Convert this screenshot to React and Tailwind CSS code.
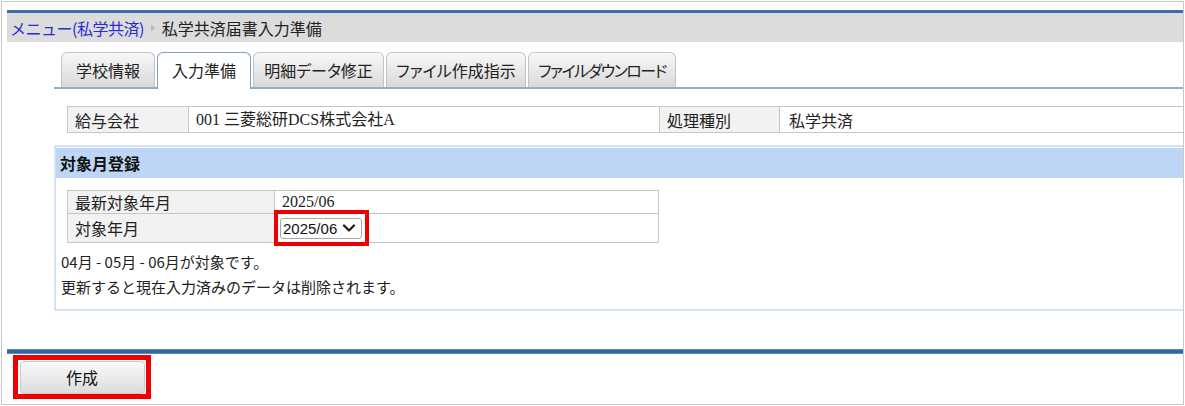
const jp = { fontFamily: '"Noto Sans CJK JP", "Noto Sans", sans-serif' }
const mixed = { fontFamily: '"Liberation Serif", "Noto Sans CJK JP", serif' }

const TABS = [
  { label: '学校情報', w: 'w-[94px]' },
  { label: '入力準備', w: 'w-[94px]', active: true },
  { label: '明細データ修正', w: 'w-[131px]' },
  { label: 'ファイル作成指示', w: 'w-[140px]' },
  { label: 'ファイルダウンロード', w: 'w-[148px]', tight: true },
]

function Tab({ tab }) {
  const text = (
    <span className={`whitespace-nowrap ${tab.tight ? 'tracking-[-1.5px]' : ''}`} style={{ fontFeatureSettings: '"palt"' }}>
      {tab.label}
    </span>
  )
  if (tab.active) {
    return (
      <div className={`${tab.w} h-[37px] -mb-[2px] pb-[2px] flex items-center justify-center rounded-t-[6px] border border-b-0 border-[#7f9fc4] bg-white text-[16px] leading-none text-[#222]`}>
        {text}
      </div>
    )
  }
  return (
    <div className={`${tab.w} h-[35px] flex items-center justify-center rounded-t-[6px] border border-b-0 border-[#c4c4c4] bg-gradient-to-b from-[#f8f8f8] to-[#d9d9d9] text-[16px] leading-none text-[#222]`}>
      {text}
    </div>
  )
}

export default function App() {
  return (
    <div className="w-[1185px] h-[406px] bg-white pt-px pl-px overflow-hidden" style={jp}>
      <div className="w-[1183px] h-[404px] border border-[#c8c8c8] pl-[5px] pt-[8px] flex flex-col overflow-hidden">
        {/* breadcrumb header */}
        <div className="h-[32px] border-t-[3px] border-[#3b6ea8] bg-[#dcdcdc] flex items-center pl-[3px] text-[16px] leading-none shrink-0">
          <span className="text-[#2b2bd6] tracking-[-0.5px]">メニュー(私学共済)</span>
          <svg width="12" height="12" viewBox="0 0 12 12" className="mx-[3px]">
            <path d="M4 2.5 L8.5 6 L4 9.5 Z" fill="#a9bfd6" />
          </svg>
          <span className="text-[#222]">私学共済届書入力準備</span>
        </div>

        {/* tabs */}
        <div className="mt-[10px] ml-[47px] border-b-2 border-[#93aecb] flex items-end gap-[2px] pl-[7px] shrink-0">
          {TABS.map(t => <Tab key={t.label} tab={t} />)}
        </div>

        {/* company info */}
        <div className="mt-[17px] ml-[60px] w-[1130px] flex h-[27px] border border-[#c6c6c6] text-[16px] leading-none text-[#222] shrink-0">
          <div className="w-[121px] bg-[#f2f2f2] border-r border-[#c6c6c6] flex items-center pl-[7px]">給与会社</div>
          <div className="w-[471px] border-r border-[#c6c6c6] flex items-center pl-[7px] text-[16px]" style={mixed}>001 三菱総研DCS株式会社A</div>
          <div className="w-[120px] bg-[#f2f2f2] border-r border-[#c6c6c6] flex items-center pl-[7px]">処理種別</div>
          <div className="flex-1 flex items-center pl-[9px]">私学共済</div>
        </div>

        {/* target month panel */}
        <div className="mt-[12px] ml-[47px] h-[166px] border-2 border-[#d3e2f4] border-r-0 shrink-0">
          <div className="mt-[1px] h-[30px] bg-[#bed6f5] flex items-center pl-[4px] text-[16px] font-bold leading-none text-[#111]">
            対象月登録
          </div>
          <div className="mt-[12px] ml-[11px] w-[592px] border border-[#c6c6c6] text-[16px] leading-none text-[#222]">
            <div className="flex h-[23px] border-b border-[#c6c6c6]">
              <div className="w-[207px] bg-[#f2f2f2] border-r border-[#c6c6c6] flex items-center pl-[7px]">最新対象年月</div>
              <div className="flex-1 flex items-center pl-[7px] text-[16px]" style={mixed}>2025/06</div>
            </div>
            <div className="flex h-[28px]">
              <div className="w-[207px] bg-[#f2f2f2] border-r border-[#c6c6c6] flex items-center pl-[7px]">対象年月</div>
              <div className="flex-1 flex items-center">
                <div className="w-[95px] h-[36px] border-4 border-[#ee0000] flex items-center pl-[2px] -ml-px">
                  <div className="w-[82px] h-[21px] border border-[#a8a8a8] rounded-[3px] bg-white flex items-center pl-[2px] gap-[5px]">
                    <span className="text-[15px] leading-none text-[#111]" style={{ fontFamily: '"Liberation Sans", sans-serif' }}>2025/06</span>
                    <svg width="14" height="10" viewBox="0 0 14 10">
                      <path d="M2 2.5 L7 7.5 L12 2.5" fill="none" stroke="#222" strokeWidth="2.4" strokeLinejoin="round" strokeLinecap="round" />
                    </svg>
                  </div>
                </div>
              </div>
            </div>
          </div>
          <div className="mt-[6px] ml-[5px] text-[15px] leading-[25px] text-[#222]">
            <p>04月 - 05月 - 06月が対象です。</p>
            <p>更新すると現在入力済みのデータは削除されます。</p>
          </div>
        </div>

        {/* footer */}
        <div className="mt-[38px] h-[5px] border-t border-b border-[#5b8cbd] bg-[#2f689f] shrink-0" />
        <div className="mt-[1px] ml-[6px] w-[138px] h-[44px] border-[5px] border-[#ee0000] flex items-center justify-center shrink-0">
          <button className="w-[125px] h-[33px] rounded-[4px] border border-[#c9c9c9] bg-gradient-to-b from-[#fafafa] to-[#dcdcdc] text-[16px] leading-none text-[#111]">
            作成
          </button>
        </div>
      </div>
    </div>
  )
}
